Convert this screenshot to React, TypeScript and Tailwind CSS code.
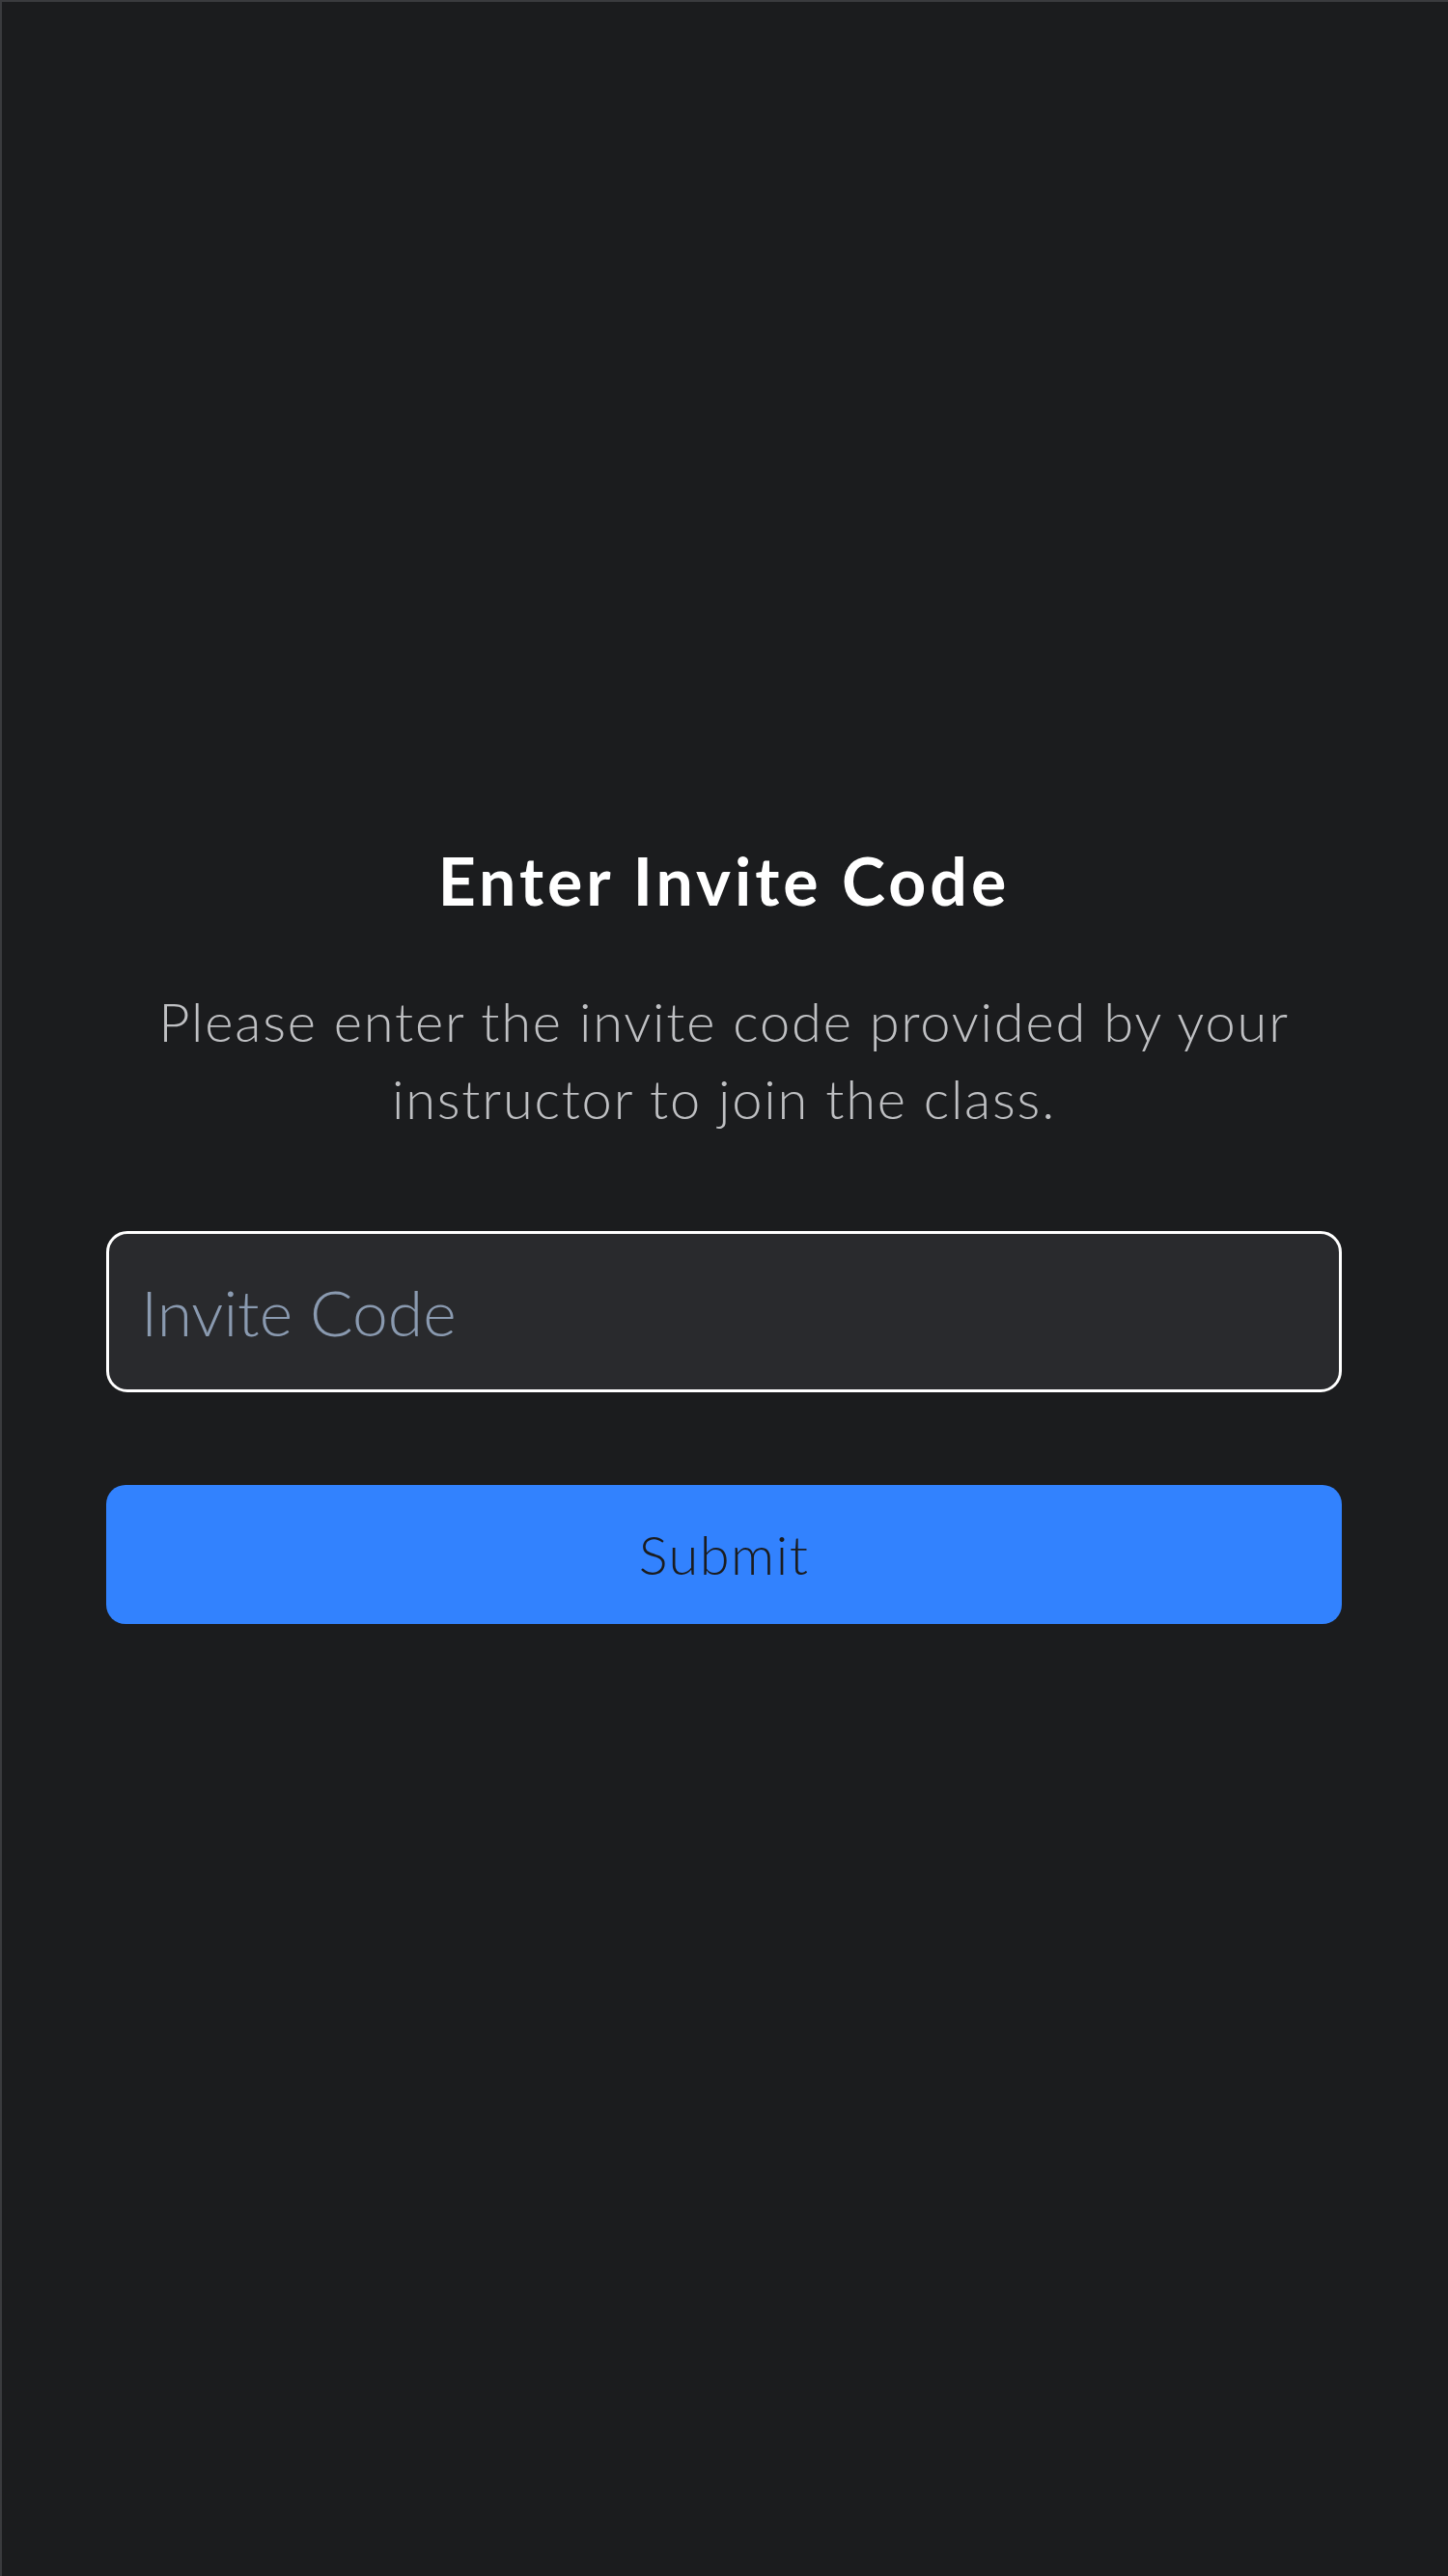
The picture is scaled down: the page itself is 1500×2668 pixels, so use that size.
import { useState } from 'react';

export default function App() {
  const [code, setCode] = useState('');

  return (
    <div
      className="w-full h-[2668px] bg-[#1b1c1e] border-t-2 border-l-2 border-[#3a3b3e] flex flex-col items-center pl-[108px] pr-[110px] pt-[870px]"
      style={{ fontFamily: 'Lato, "Noto Sans", "Liberation Sans", sans-serif' }}
    >
      <h1 className="text-white text-[68px] leading-[80px] font-bold tracking-[4px]">
        Enter Invite Code
      </h1>

      <p className="mt-[66px] text-[#bfc0c3] text-[56px] leading-[80px] font-light tracking-[1.8px] text-center">
        Please enter the invite code provided by your
        <br />
        instructor to join the class.
      </p>

      <input
        type="text"
        value={code}
        onChange={(e) => setCode(e.target.value)}
        placeholder="Invite Code"
        className="mt-[97px] w-full h-[167px] rounded-[22px] border-[3px] border-white bg-[#292a2d] pl-[33px] text-[66px] font-light text-white placeholder:text-[#8a9ab0] outline-none"
      />

      <button
        type="button"
        className="mt-[96px] w-full h-[144px] rounded-[20px] bg-[#3282fe] text-[#1b1c1e] text-[56px] font-light tracking-[1.5px]"
      >
        Submit
      </button>
    </div>
  );
}
